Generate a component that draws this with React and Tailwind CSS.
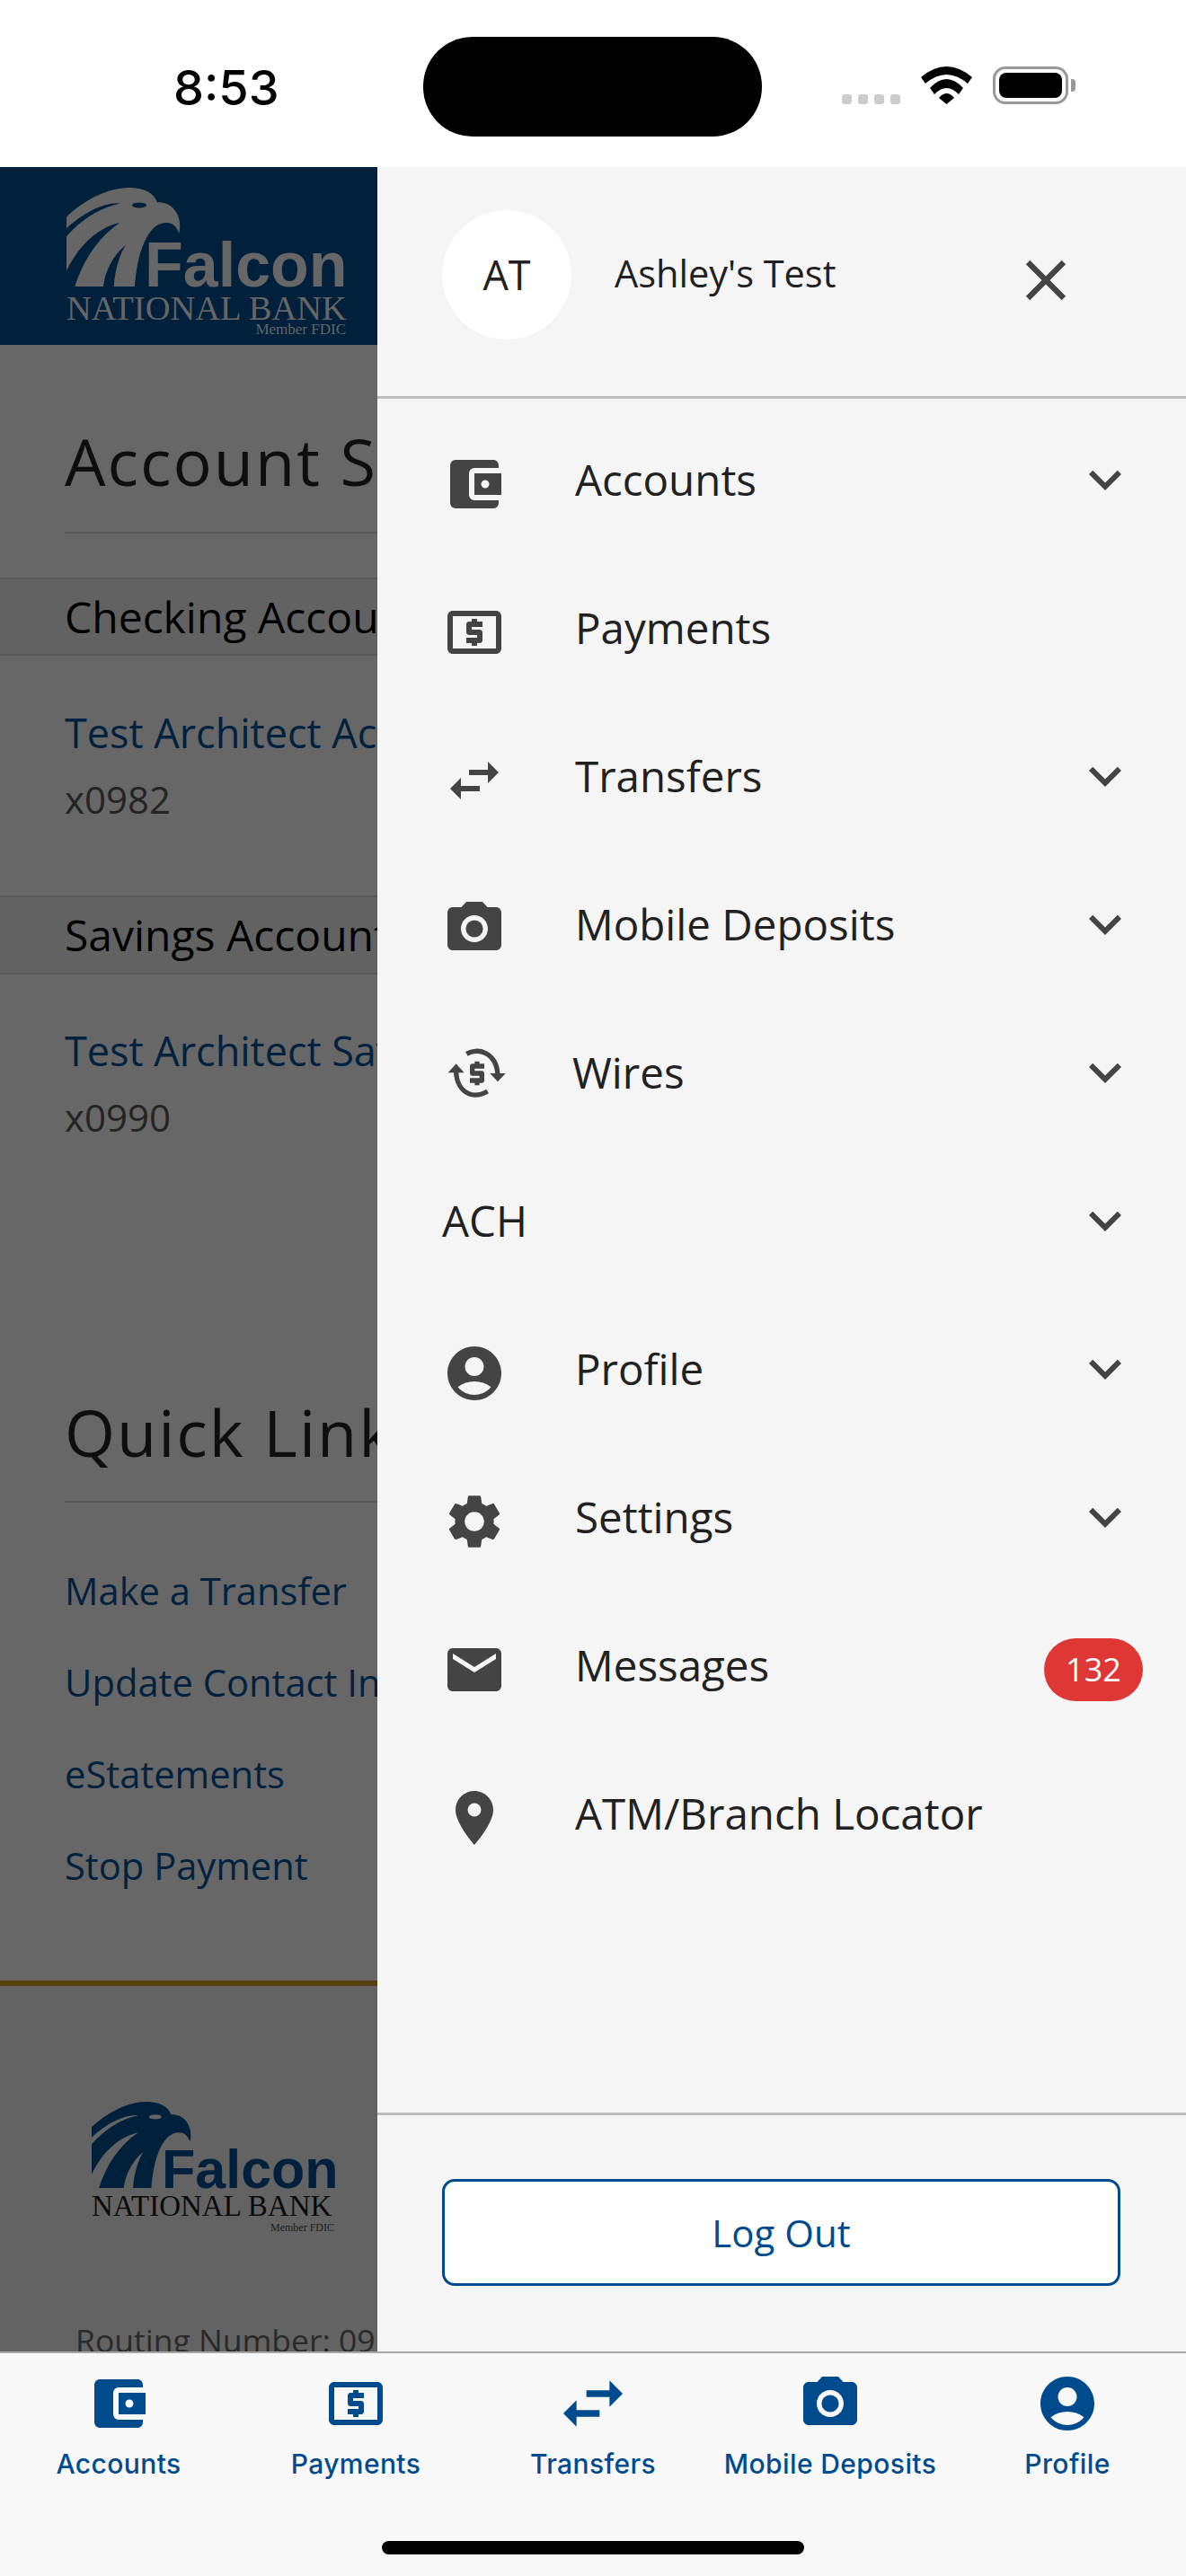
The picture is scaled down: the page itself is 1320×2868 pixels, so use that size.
import React from 'react';
import {
  MdAccountBalanceWallet,
  MdLocalAtm,
  MdSwapHoriz,
  MdPhotoCamera,
  MdAccountCircle,
  MdSettings,
  MdEmail,
  MdPlace,
  MdExpandMore,
  MdClose,
} from 'react-icons/md';

const OPEN_SANS = "font-['Open_Sans',sans-serif]";

const WiresIcon = () => (
  <svg viewBox="45 22 216 216" className="w-[72px] h-[72px]" fill="#444444">
    <path d="M118 65C135 55 160 52 180 62C205 74 220 100 222 135" fill="none" stroke="#444444" strokeWidth="16" />
    <path d="M196 130H248L222 158Z" />
    <path d="M188 190C170 200 145 207 125 198C100 187 84 160 83 125" fill="none" stroke="#444444" strokeWidth="16" />
    <path d="M56 128H110L83 98Z" />
    <g transform="translate(57 34) scale(8)">
      <path d="M11 17h2v-1h1c.55 0 1-.45 1-1v-3c0-.55-.45-1-1-1h-3v-1h4V8h-2V7h-2v1h-1c-.55 0-1 .45-1 1v3c0 .55.45 1 1 1h3v1H9v2h2v1z" />
    </g>
  </svg>
);

const Eagle = ({ className }) => (
  <svg viewBox="42 43 381 329" preserveAspectRatio="none" className={className} fill="currentColor" fillRule="evenodd">
    <path d="M42 140C100 85 180 43 250 43C300 43 335 60 345 92C390 88 432 130 418 195C408 170 395 160 375 160C320 160 280 240 270 372L200 372C205 310 220 265 240 233C195 270 170 325 165 372L70 372C95 290 145 210 220 160C150 175 85 230 42 320L42 205C90 150 150 110 220 95C170 90 100 125 42 178Z M261 101a24 9 0 1 0 48 0a24 9 0 1 0 -48 0Z" />
  </svg>
);

const menuItems = [
  { label: 'Accounts', icon: MdAccountBalanceWallet, chevron: true },
  { label: 'Payments', icon: MdLocalAtm },
  { label: 'Transfers', icon: MdSwapHoriz, chevron: true },
  { label: 'Mobile Deposits', icon: MdPhotoCamera, chevron: true },
  { label: 'Wires', wires: true, chevron: true },
  { label: 'ACH', chevron: true },
  { label: 'Profile', icon: MdAccountCircle, chevron: true },
  { label: 'Settings', icon: MdSettings, chevron: true },
  { label: 'Messages', icon: MdEmail, badge: '132' },
  { label: 'ATM/Branch Locator', icon: MdPlace },
];

const tabs = [
  { label: 'Accounts', icon: MdAccountBalanceWallet, iconClass: 'w-[72px] h-[72px]' },
  { label: 'Payments', icon: MdLocalAtm, iconClass: 'w-[72px] h-[72px]' },
  { label: 'Transfers', icon: MdSwapHoriz, iconClass: 'w-[88px] h-[88px] -my-[8px]' },
  { label: 'Mobile Deposits', icon: MdPhotoCamera, iconClass: 'w-[72px] h-[72px]' },
  { label: 'Profile', icon: MdAccountCircle, iconClass: 'w-[72px] h-[72px]' },
];

const StatusBar = () => (
  <div className="h-[186px] bg-white flex items-center pt-[7px] shrink-0">
    <div className="w-[471px] pl-[193px] mt-[3px] font-['Inter',sans-serif] font-medium text-[54px] leading-none text-black whitespace-nowrap">8:53</div>
    <div className="w-[377px] h-[111px] rounded-[55px] bg-black" />
    <div className="flex items-end h-[42px] ml-[89px] -mt-[3px]">
      <div className="flex gap-[7px]">
        <span className="w-[11px] h-[11px] rounded-[3px] bg-[#cccccc]" />
        <span className="w-[11px] h-[11px] rounded-[3px] bg-[#cccccc]" />
        <span className="w-[11px] h-[11px] rounded-[3px] bg-[#cccccc]" />
        <span className="w-[11px] h-[11px] rounded-[3px] bg-[#cccccc]" />
      </div>
      <svg viewBox="0 0 57 42" className="w-[57px] h-[42px] ml-[23px]" fill="#000000">
        <path d="M0 12Q28.5 -12 57 12L52 19Q28.5 -1 5 19Z" />
        <path d="M10 24Q28.5 4 47 24L42 31Q28.5 17 15 31Z" />
        <path d="M20 35Q28.5 25 37 35L28.5 42Z" />
      </svg>
      <div className="flex items-center ml-[23px]">
        <div className="w-[84px] h-[42px] rounded-[14px] border-[3px] border-[#999999] p-[4px]">
          <div className="w-full h-full rounded-[8px] bg-black" />
        </div>
        <div className="w-[5px] h-[14px] ml-[3px] rounded-r-[4px] bg-[#999999]" />
      </div>
    </div>
  </div>
);

const Background = () => (
  <div className={`w-[420px] shrink-0 overflow-hidden bg-[#676767] ${OPEN_SANS} whitespace-nowrap`}>
    <div className="h-[198px] bg-[#00203c] pl-[74px] pt-[23px] text-[#666666]">
      <div className="flex items-end h-[110px]">
        <Eagle className="w-[127px] h-[110px] shrink-0" />
        <span className="-ml-[40px] font-['Liberation_Sans',sans-serif] font-bold text-[70px] leading-[48px]">Falcon</span>
      </div>
      <div className="mt-[12px] font-['Liberation_Serif',serif] text-[38.5px] leading-[24px]">NATIONAL BANK</div>
      <div className="mt-[5px] w-[311px] text-right font-['Liberation_Serif',serif] text-[17px] leading-[14px]">Member FDIC</div>
    </div>

    <h1 className="mt-[89px] ml-[72px] font-medium text-[72px] leading-[80px] tracking-[2px] text-[#0e0e0e]">Account S</h1>
    <div className="mt-[39px] ml-[72px] h-[2px] bg-[#5a5a5a]" />

    <div className="mt-[49px] h-[87px] flex items-center pl-[72px] bg-[#626262] border-y-2 border-[#5a5a5a] text-[48px] text-black">Checking Accounts</div>
    <div className="mt-[56px] ml-[72px] text-[45px] leading-[60px] text-[#00223f]">Test Architect Account</div>
    <div className="mt-[19px] ml-[72px] text-[42px] leading-[50px] text-[#242424]">x0982</div>

    <div className="mt-[82px] h-[88px] flex items-center pl-[72px] bg-[#626262] border-y-2 border-[#5a5a5a] text-[48px] text-black">Savings Accounts</div>
    <div className="mt-[55px] ml-[72px] text-[45px] leading-[60px] text-[#00223f]">Test Architect Savings</div>
    <div className="mt-[19px] ml-[72px] text-[42px] leading-[50px] text-[#242424]">x0990</div>

    <h2 className="mt-[285px] ml-[72px] font-medium text-[72px] leading-[80px] tracking-[2px] text-[#0e0e0e]">Quick Links</h2>
    <div className="mt-[37px] ml-[72px] h-[2px] bg-[#5a5a5a]" />

    <div className="mt-[68px] ml-[72px] flex flex-col gap-[42px] text-[41.7px] leading-[60px] text-[#00223f]">
      <div>Make a Transfer</div>
      <div>Update Contact Info</div>
      <div>eStatements</div>
      <div>Stop Payment</div>
    </div>

    <div className="mt-[98px] h-[6px] bg-[#573f0e]" />
    <div className="bg-[#636363] h-[500px]">
      <div className="pt-[129px] pl-[102px] text-[#00203c]">
        <div className="flex items-end h-[96px]">
          <Eagle className="w-[111px] h-[96px] shrink-0" />
          <span className="-ml-[33px] font-['Liberation_Sans',sans-serif] font-bold text-[61px] leading-[42px]">Falcon</span>
        </div>
        <div className="mt-[9px] font-['Liberation_Serif',serif] text-[33px] leading-[22px] text-[#0a0a0a]">NATIONAL BANK</div>
        <div className="mt-[7px] w-[270px] text-right font-['Liberation_Serif',serif] text-[12px] leading-[12px] text-[#1c1c1c]">Member FDIC</div>
      </div>
      <div className="mt-[94px] ml-[84px] text-[35.5px] leading-[50px] text-[#2a2a2a]">Routing Number: 09</div>
    </div>
  </div>
);

const MenuRow = ({ item }) => {
  const Icon = item.icon;
  return (
    <div className="h-[165px] flex items-center pl-[72px] pr-[54px]">
      {Icon && <Icon className="w-[72px] h-[72px] mt-[10px] text-[#444444] shrink-0" />}
      {item.wires && (
        <div className="ml-[3px] mt-[2px] shrink-0">
          <WiresIcon />
        </div>
      )}
      <span className={`${Icon ? 'ml-[76px]' : item.wires ? 'ml-[70px]' : ''} text-[47.5px] text-[#212121] whitespace-nowrap`}>{item.label}</span>
      {item.chevron && <MdExpandMore className="w-[72px] h-[72px] ml-auto text-[#444444]" />}
      {item.badge && (
        <span className="ml-auto -mr-[6px] mt-[10px] w-[110px] h-[70px] rounded-full bg-[#df3636] text-white text-[36px] flex items-center justify-center">{item.badge}</span>
      )}
    </div>
  );
};

const Drawer = () => (
  <div className={`flex-1 flex flex-col bg-[#f5f5f5] ${OPEN_SANS}`}>
    <div className="h-[255px] flex items-start pt-[48px] pl-[72px] shrink-0">
      <div className="w-[144px] h-[144px] rounded-full bg-white flex items-center justify-center text-[45px] text-[#212121] shrink-0">AT</div>
      <span className="ml-[48px] mt-[46px] text-[41.5px] leading-[48px] text-[#212121] whitespace-nowrap">Ashley's Test</span>
      <MdClose className="w-[76px] h-[76px] ml-auto mr-[118px] mt-[40px] text-[#444444]" />
    </div>
    <div className="h-[3px] bg-[#bdbdbd] shrink-0" />
    <div className="pt-[7px]">
      {menuItems.map((item) => (
        <MenuRow key={item.label} item={item} />
      ))}
    </div>
    <div className="mt-auto h-[3px] bg-[#bdbdbd] shrink-0" />
    <div className="h-[263px] pt-[71px] pl-[72px] pr-[73px] shrink-0">
      <button className="w-full h-[119px] rounded-[14px] border-[3px] border-[#004b8d] bg-white text-[42px] text-[#004b8d]">Log Out</button>
    </div>
  </div>
);

const TabBar = () => (
  <div className="h-[250px] shrink-0 bg-[#f8f8f8] border-t-2 border-[#a8a8a8]">
    <div className="flex pt-[20px]">
      {tabs.map(({ label, icon: Icon, iconClass }) => (
        <div key={label} className="flex-1 flex flex-col items-center text-[#004b8d]">
          <Icon className={iconClass} />
          <span className="mt-[13px] font-['Inter',sans-serif] font-medium text-[30px] tracking-[0.4px] leading-[36px] whitespace-nowrap">{label}</span>
        </div>
      ))}
    </div>
    <div className="mt-[68px] mx-auto w-[470px] h-[15px] rounded-full bg-black" />
  </div>
);

export default function App() {
  return (
    <div className="w-[1320px] h-[2868px] flex flex-col overflow-hidden bg-white">
      <StatusBar />
      <div className="flex flex-1 min-h-0">
        <Background />
        <Drawer />
      </div>
      <TabBar />
    </div>
  );
}
